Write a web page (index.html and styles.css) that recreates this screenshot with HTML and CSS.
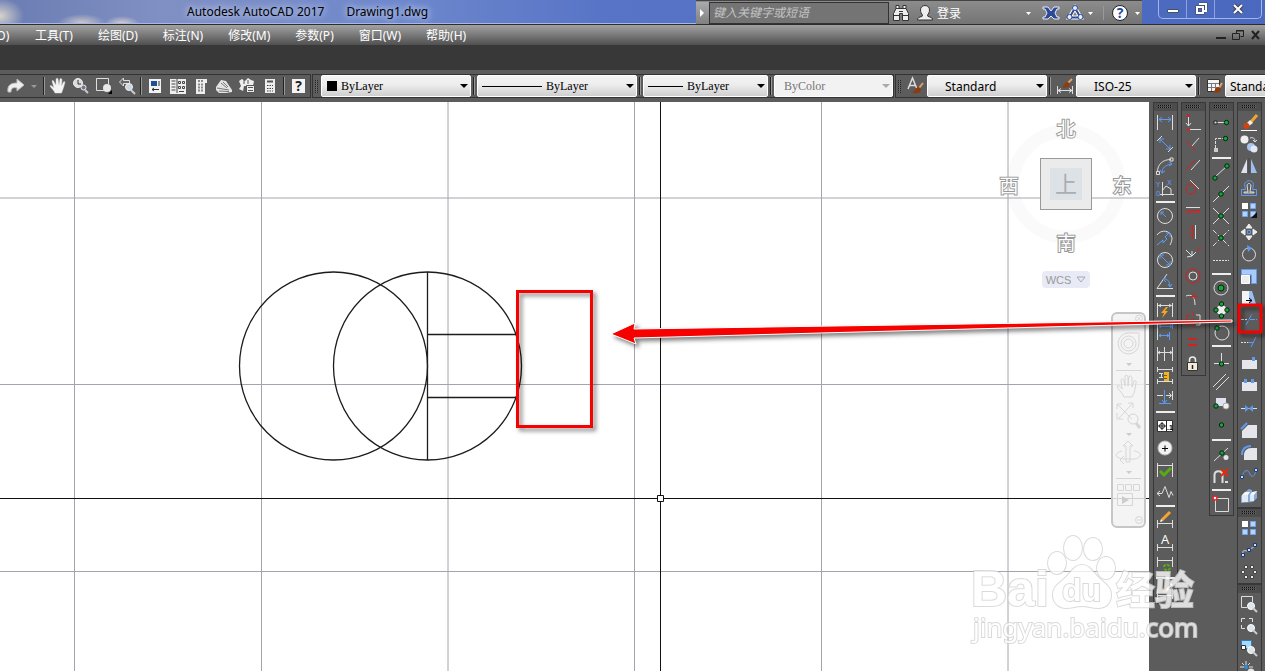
FILE: index.html
```html
<!DOCTYPE html>
<html lang="zh-CN">
<head>
<meta charset="utf-8">
<title>Autodesk AutoCAD 2017</title>
<link rel="stylesheet" href="styles.css">
</head>
<body>
<div class="app">
  <header class="titlebar">
    <h1 class="title"><span>Autodesk AutoCAD 2017</span><span>Drawing1.dwg</span></h1>
    <div class="info">
      <button class="expand" aria-label="展开"><svg width="12" height="22"><path d="M4 7l4 4-4 4z" fill="#fff"/></svg></button>
      <input class="search" type="text" aria-label="搜索" placeholder="键入关键字或短语">
      <button class="info-btn" aria-label="搜索"><svg width="24" height="22"><path d="M7 3.500h3v3h4v-3h3v3l2.500 5v7h-6v-7h-3v7h-6v-7L7 6.500z" fill="#eee" stroke="#333"/><path d="M5 13.500h5M14 13.500h5M10 9.500h4M7 6.500h3M14 6.500h3" stroke="#333"/></svg></button>
      <button class="info-btn login" aria-label="登录"><svg width="24" height="22"><path d="M12 3.500c3 0 4.500 2 4.500 4.500 0 2-1 4-2 5l.5 1.500c3 .5 4.500 1.500 4.500 3.500h-15c0-2 1.500-3 4.500-3.500l.5-1.500c-1-1-2-3-2-5 0-2.500 1.500-4.500 4.500-4.500z" fill="#eee" stroke="#333"/></svg><span>登录</span></button>
      <svg class="tri" width="8" height="22"><path d="M1 10h5l-2.500 3z" fill="#fff"/></svg>
      <button class="info-btn" aria-label="Exchange"><svg width="24" height="22"><path d="M4 5h5l3 4 3-4h5v2h-2l-2 4 2 4h2v2h-5l-3-3-3 3H4v-2h2l2-4-2-4H4z" fill="#2c4a96" stroke="#e8edff"/></svg></button>
      <button class="info-btn" aria-label="A360"><svg width="24" height="22"><path d="M12 6L6.500 15.500h11z" fill="none" stroke="#fff" stroke-width="4"/><path d="M12 6L6.500 15.500h11z" fill="none" stroke="#2c4a96" stroke-width="2"/><g fill="#e8edff" stroke="#2c4a96"><circle cx="12" cy="6" r="2.500"/><circle cx="6.500" cy="15" r="2.500"/><circle cx="17.500" cy="15" r="2.500"/></g></svg></button>
      <svg width="8" height="22"><path d="M1 10h5l-2.500 3z" fill="#fff"/></svg>
      <span class="info-line"></span>
      <button class="info-btn" aria-label="帮助"><svg width="24" height="22"><circle cx="12" cy="11" r="7.500" fill="#fff" stroke="#222"/><text x="12" y="16" class="help">?</text></svg></button>
      <svg width="10" height="22"><path d="M3 10h5l-2.500 3z" fill="#fff"/></svg>
    </div>
    <div class="winctl">
      <button aria-label="最小化"><svg width="14" height="14"><path d="M1.500 7.500h11v3h-11z" fill="#fff" stroke="#456"/></svg></button>
      <button aria-label="还原"><svg width="14" height="14"><g stroke="#445" stroke-width="3" fill="none"><path d="M5 2h7v7"/><path d="M3 5h6v6H3z"/></g><g stroke="#fff" stroke-width="2" fill="none"><path d="M5 2h7v7h-2"/><path d="M3 5h6v6H3z"/></g></svg></button>
      <button class="wide" aria-label="关闭"><svg width="14" height="14"><path d="M3 3l8 8M11 3l-8 8" stroke="#445" stroke-width="4"/><path d="M3 3l8 8M11 3l-8 8" stroke="#fff" stroke-width="2"/></svg></button>
    </div>
  </header>

  <nav class="menubar">
    <button class="cut">(O)</button><button>工具(T)</button><button>绘图(D)</button><button>标注(N)</button><button>修改(M)</button><button>参数(P)</button><button>窗口(W)</button><button>帮助(H)</button>
    <div class="docctl">
      <button aria-label="最小化文档"><svg width="14" height="14"><path d="M2 10h10" stroke="#222" stroke-width="2"/></svg></button>
      <button aria-label="还原文档"><svg width="14" height="14" fill="none" stroke="#222"><path d="M5.500 5V2.500h7v6h-3M5 3h8"/><path d="M1.500 5.500h7v6h-7z"/></svg></button>
      <button aria-label="关闭文档"><svg width="14" height="14"><path d="M4 3l7 8M11 3l-7 8" stroke="#222" stroke-width="2"/></svg></button>
    </div>
  </nav>
  <div class="blank"></div>

  <div class="bars">
    <div class="bar first">
      <button aria-label="重做"><svg class="ic" viewBox="0 0 22 22"><path d="M12 4l7 6-7 6v-3c-4-1-6 0-6 4H3c-1-7 3-9 9-9z" fill="#eee" stroke="#bbb"/></svg></button>
      <button class="drop" aria-label="重做列表"><svg width="10" height="22"><path d="M2 10h6l-3 3z" fill="#999"/></svg></button>
      <i class="sep"></i>
      <button aria-label="平移"><svg class="ic" viewBox="0 0 22 22"><path d="M8 18c-1-3-4-5-5-7 1-1 2 0 4 2L5 6c1-1 2 0 2 1l2 3V4c1-1 2-1 2 0l1 6 1-6c1-1 2 0 2 1l-.5 6 2-4c1-1 2 0 1 2-1 4-2 6-3 9z" fill="#f4f4f4" stroke="#ddd" stroke-width=".5"/></svg></button>
      <button aria-label="实时缩放"><svg class="ic" viewBox="0 0 22 22"><circle cx="8" cy="8" r="4.500" fill="#ddd" stroke="#eee"/><path d="M8 5v4h3" fill="none" stroke="#333"/><circle cx="13.500" cy="12.500" r="2.500" fill="#778" stroke="#eee"/><path d="M15 15l3 3" stroke="#ccc" stroke-width="2"/></svg></button>
      <button aria-label="窗口缩放"><svg class="ic" viewBox="0 0 22 22"><path d="M12 15.500H3.500v-12h12V9" class="w"/><circle cx="14" cy="13" r="4" fill="#e8e8e8"/><path d="M19 15v4h-4z" fill="#000"/></svg></button>
      <button aria-label="上一个视图"><svg class="ic" viewBox="0 0 22 22"><path d="M3.500 7l4-4v2.500h6v3h-6V11z" fill="#666" stroke="#ddd"/><circle cx="13" cy="12" r="3.500" fill="#ccd6e6" stroke="#eee"/><path d="M15 15l4 4" stroke="#ccc" stroke-width="2"/></svg></button>
      <i class="sep"></i>
      <button aria-label="特性"><svg class="ic" viewBox="0 0 22 22"><path d="M5 4h12v14H5z" fill="#f2f2f2"/><path d="M7 6h6v5H7z" fill="#1d4f9c"/><path d="M8 14.500h7M10 13l-2 1.500 2 1.500M15 6v5" stroke="#333" fill="none"/></svg></button>
      <button aria-label="设计中心"><svg class="ic" viewBox="0 0 22 22"><path d="M3 4h16v15H3z" fill="#eee"/><g fill="none" stroke="#444"><path d="M4.500 6h4M4.500 9h4M4.500 12h4M4.500 15h4M10 4v14"/><path d="M11.500 6.500h2v2h-2zM15.500 6.500h2v2h-2zM11.500 11.500h2v2h-2zM15.500 11.500h2v2h-2zM12 16.500h5"/></g></svg></button>
      <button aria-label="工具选项板"><svg class="ic" viewBox="0 0 22 22"><path d="M6 4h11v4h-2v11H6z" fill="#eee"/><path d="M8 6h5M8 9.500h5M8 12.500h5M8 15.500h5" stroke="#888" stroke-width="2" stroke-dasharray="2 1"/></svg></button>
      <button aria-label="图纸集"><svg class="ic" viewBox="0 0 22 22"><path d="M3 12l5-7 5 1 6 9v2l-6 1H6l-3-3z" fill="#e4e4e4"/><path d="M8 8l6 5M10 7l5 5M4 13l12 2M6 16l10 .5" stroke="#777" fill="none"/></svg></button>
      <button aria-label="标记集"><svg class="ic" viewBox="0 0 22 22"><path d="M3 6l3-2 3 2 3-3 3 2 3 1-1 5H8l-1 5-4-2 2-3z" fill="#eee"/><path d="M10.500 10.500h8v7h-8z" fill="#eee" stroke="#555"/><path d="M12 12.500h5M12 15.500h5M8 4v5M12 5v4" stroke="#555"/></svg></button>
      <button aria-label="快速计算器"><svg class="ic" viewBox="0 0 22 22"><path d="M6 4h10v14H6z" fill="#eee"/><path d="M8 6.500h6" stroke="#555" stroke-width="2"/><path d="M8 10.500h6M8 13.500h6M8 16h6" stroke="#444" stroke-dasharray="1.500 1"/></svg></button>
      <i class="sep"></i>
      <button aria-label="帮助"><svg class="ic" viewBox="0 0 22 22"><path d="M5 4h13v14H5z" fill="#f4f4f4"/><text x="11.500" y="16" class="q">?</text></svg></button>
    </div>
    <div class="bar">
      <i class="grip-v"></i>
      <label class="combo w150"><svg width="15" height="12"><path d="M5 1h10v10H5z"/></svg><select class="song" aria-label="颜色"><option>ByLayer</option></select><svg width="12" height="8"><path d="M2 2h8L6 6z"/></svg></label>
      <i class="sep6"></i>
      <label class="combo w160"><svg width="64" height="12"><path d="M4 6.500h60" stroke="#000"/></svg><select class="song" aria-label="线型"><option>ByLayer</option></select><svg width="12" height="8"><path d="M2 2h8L6 6z"/></svg></label>
      <i class="sep6"></i>
      <label class="combo w125"><svg width="39" height="12"><path d="M4 6.500h35" stroke="#000"/></svg><select class="song" aria-label="线宽"><option>ByLayer</option></select><svg width="12" height="8"><path d="M2 2h8L6 6z"/></svg></label>
      <i class="sep6"></i>
      <label class="combo w119 off"><select class="song" disabled aria-label="打印样式"><option>ByColor</option></select><svg width="12" height="8"><path d="M2 2h8L6 6z" fill="#aaa"/></svg></label>
    </div>
    <div class="bar last">
      <i class="grip-v"></i>
      <button aria-label="文字样式"><svg class="ic" viewBox="0 0 22 22"><path d="M3 14L7.500 3 12 14M5 10.500h6" fill="none" stroke="#ddd" stroke-width="1.500"/><path d="M18 8l-4 5" stroke="#e0a36c" stroke-width="2"/><path d="M14 12c-4 0-3 4-7 5 4 3 9 1 9-3z" fill="#8e3c0c"/></svg></button>
      <label class="combo w120 pad"><select aria-label="文字样式"><option>Standard</option></select><svg width="12" height="8"><path d="M2 2h8L6 6z"/></svg></label>
      <i class="sep6"></i>
      <button aria-label="标注样式管理器"><svg class="ic" viewBox="0 0 22 22"><path d="M3.500 11v8M18.500 11v8M4 15.500h14M7 13.500l-3 2 3 2M15 13.500l3 2-3 2" class="w"/><path d="M18 4l-4 4" stroke="#e0a36c" stroke-width="2"/><path d="M14 7c-4 0-3 3-6 5 4 2 8 0 8-3z" fill="#8e3c0c"/></svg></button>
      <label class="combo w120 pad"><select aria-label="标注样式"><option>ISO-25</option></select><svg width="12" height="8"><path d="M2 2h8L6 6z"/></svg></label>
      <i class="sep6"></i>
      <button aria-label="表格样式"><svg class="ic" viewBox="0 0 22 22"><path d="M4.500 4.500h12v12h-12z" fill="#f4f4f4" stroke="#333"/><path d="M5 8.500h11M5 12.500h11M8.500 9v7M12.500 9v7" stroke="#777"/><path d="M19 8l-3 5" stroke="#e0a36c" stroke-width="2"/><path d="M16 12c-4 0-3 3-6 5 4 2 8 0 8-3z" fill="#8e3c0c"/></svg></button>
      <label class="combo w120 near"><select aria-label="表格样式"><option>Standard</option></select><svg width="12" height="8"><path d="M2 2h8L6 6z"/></svg></label>
    </div>
  </div>

  <div class="work">
    <main class="canvas">
      <svg class="drawing" aria-label="绘图区">
        <g stroke="#a4a4ae"><path d="M74.500 0v2000M261.500 0v2000M448 0v2000M634.500 0v2000M821.500 0v2000M1008 0v2000M0 96h3000M0 282.500h3000M0 469.500h3000"/></g>
        <g fill="none" stroke="#1c1c1c" stroke-width="1.300"><circle cx="333.500" cy="264" r="94"/><circle cx="427.500" cy="264" r="94"/><path d="M427.500 170v188M427.500 232.500h90M427.500 295.500h90"/></g>
        <path d="M660.500 0v2000M0 396.500h3000" stroke="#111"/>
        <path d="M657.500 393.500h6v6h-6z" fill="#fff" stroke="#111"/>
      </svg>
      <div class="cube">
        <svg width="136" height="150" viewBox="998 112 136 150">
          <circle cx="1066" cy="184" r="53" fill="none" stroke="#bbb" stroke-opacity=".08" stroke-width="13"/>
          <rect x="1040.500" y="158.500" width="51" height="51" fill="#ebebeb" stroke="#999"/>
          <rect x="1050" y="168" width="32" height="32" fill="#dde2e6"/>
          <text x="1066" y="192" class="face">上</text>
          <g class="dir"><text x="1066" y="136">北</text><text x="1009" y="193">西</text><text x="1122" y="193">东</text><text x="1066" y="250">南</text></g>
        </svg>
        <button class="wcs">WCS <svg width="10" height="7"><path d="M1 1h8L5 6z" fill="none" stroke="#aaa"/></svg></button>
      </div>
      <svg class="navbar" width="35" height="216" viewBox="0 0 35 216">
        <rect x="1" y="1" width="33" height="214" rx="5" fill="#f2f2f2" fill-opacity=".85" stroke="#c6c6c6" stroke-width="2"/>
        <g fill="none" stroke="#d6d6d6">
          <path d="M17.500 21a10.500 10.500 0 1 0 10.500 10.500V21z"/><circle cx="17.500" cy="31.500" r="7.500"/><circle cx="17.500" cy="31.500" r="4.500"/>
          <path d="M5 58.500h25M5 166.500h25"/>
          <path d="M13 85c-2-5-6-7-7-11 2-1 3 0 5 3l-1-9c1-2 3-1 3 1l1 5V64c1-1 3-1 3 1v9l1-9c1-2 3-1 3 1v9l2-6c1-1 3 0 2 2-1 6-1 9-4 14z"/>
          <path d="M7 93l14 14M21 92L8 106M6 97v-5h5M17 91h5v5M6 101v6h6"/><circle cx="22" cy="107" r="5"/><path d="M25 111l4 5" stroke-width="3"/>
          <path d="M15 150v-16h-3l5-5 5 5h-3v16zM11 139c-8 2-8 7 2 8h11c8-2 7-7-1-8M13 144l-4 4 4 4"/>
          <path d="M6.500 172.500h6v6h-6zM14.500 172.500h6v6h-6zM22.500 172.500h6v6h-6zM6.500 181.500h15v12h-15z"/>
          <circle cx="28" cy="6.500" r="3.500"/><path d="M26 4.500l4 4M30 4.500l-4 4"/><circle cx="28" cy="208" r="3.500"/><path d="M26 208h4"/>
        </g>
        <path d="M15 51h6l-3 3zM15 121h6l-3 3zM15 159h6l-3 3zM11 184l7 4-7 4z" fill="#ccc"/>
      </svg>
    </main>

    <aside class="rail">
      <div class="col">
        <div class="tool"><i class="grip-h"></i>
          <button aria-label="线性"><svg class="ic" viewBox="0 0 22 22"><path d="M3.500 4v15M18.500 4v15" class="w"/><path d="M5 8.500h12M8 6L5 8.500 8 11M14 6l3 2.500-3 2.500" class="b"/></svg></button>
          <button aria-label="对齐"><svg class="ic" viewBox="0 0 22 22"><path d="M3 8l5-5M14 19l5-5" class="w"/><path d="M6 6l10 10M6 10V6h4M16 12v4h-4" class="b"/></svg></button>
          <button aria-label="弧长"><svg class="ic" viewBox="0 0 22 22"><path d="M3.500 17C3.500 9 9 4.500 17 4.500M2.500 16.500h3v3h-3zM16 3h3v3h-3z" class="w"/><path d="M8 18c0-5 3-8 10-9M6 15l2 3 3-2M15 7l3 2-3 2" class="b"/></svg></button>
          <button aria-label="坐标"><svg class="ic" viewBox="0 0 22 22"><path d="M8.500 5v14M6 17.500h14M8 14l4-5 5 3v5" class="w"/><text x="2" y="10" class="mini">Y</text><text x="13" y="8" class="mini">X</text><text x="2" y="19" class="mini">0</text></svg></button>
          <hr>
          <button aria-label="半径"><svg class="ic" viewBox="0 0 22 22"><circle cx="11" cy="11" r="7.500" class="w"/><path d="M12 12L7 7M7 10V7h3" class="b"/></svg></button>
          <button aria-label="折弯"><svg class="ic" viewBox="0 0 22 22"><path d="M3 8c4-6 14-5 15 3 0 3-1 5-2 7" class="w"/><path d="M3 18l6-5v3l4-4-2-2 4-4M12 6h4v4" class="b"/></svg></button>
          <button aria-label="直径"><svg class="ic" viewBox="0 0 22 22"><circle cx="11" cy="11" r="7.500" class="w"/><path d="M6 6l10 10M6 10V6h4M16 12v4h-4" class="b"/></svg></button>
          <button aria-label="角度"><svg class="ic" viewBox="0 0 22 22"><path d="M13 3L3 17.500h16" class="w"/><path d="M10 8c4 0 6 3 6 8M12 6l-3 2 3 3M14 13l2 3 2-3" class="b"/></svg></button>
          <hr>
          <button aria-label="快速标注"><svg class="ic" viewBox="0 0 22 22"><path d="M3.500 4v14M18.500 4v14M4 6.500h14M7 5L5 6.500 7 8M15 5l2 1.500L15 8" class="w"/><path d="M12 8l-5 6h3l-2 5 6-7h-3l3-4z" fill="#f6a41d"/></svg></button>
          <button aria-label="基线"><svg class="ic" viewBox="0 0 22 22"><path d="M3.500 3v16" class="w"/><path d="M18.500 3v5M15.500 11v8M5 5.500h13M5 14.500h10M7 4L5 5.500 7 7M16 4l2 1.500L16 7M7 13l-2 1.500L7 16M13 13l2 1.500-2 1.500" class="b"/></svg></button>
          <button aria-label="连续"><svg class="ic" viewBox="0 0 22 22"><path d="M3.500 4v14M10.500 4v14M18.500 4v14M4 9.500h14M6 8L4 9.500 6 11M16 8l2 1.500-2 1.500" class="w"/></svg></button>
          <button aria-label="等距标注"><svg class="ic" viewBox="0 0 22 22"><path d="M3.500 2v5M18.500 2v5M4 4.500h14M3.500 14v5M18.500 14v5M4 16.500h14M5 8.500h4M7.500 8v5M5 12.500h4" class="w"/><path d="M10 7h5v9h-5v-2h3v-1h-3v-2h3v-1h-3z" fill="#f3b41b"/></svg></button>
          <button aria-label="折断标注"><svg class="ic" viewBox="0 0 22 22"><path d="M3 8.500h6M12 8.500h5M15 6l2.500 2.500L15 11M18.500 4v9" class="w"/><path d="M10.500 3v14M5 16.500h12M8 13l2.500 3 2.500-3" class="b"/></svg></button>
          <hr>
          <button aria-label="公差"><svg class="ic" viewBox="0 0 22 22"><path d="M3.500 5.500h15v11h-15z" fill="#fff" stroke="#333"/><path d="M12.500 6v10M4 11h8M8 7v8" stroke="#222"/><circle cx="8" cy="11" r="2.500" fill="none" stroke="#222"/><text x="13" y="15" class="tiny">.1</text></svg></button>
          <button aria-label="圆心标记"><svg class="ic" viewBox="0 0 22 22"><circle cx="11" cy="11" r="7" fill="#f2f2f2" stroke="#bbb"/><path d="M8 11.500h6M11 8.500v6" stroke="#000"/></svg></button>
          <button aria-label="检验"><svg class="ic" viewBox="0 0 22 22"><path d="M3.500 4v14M18.500 4v14M4 6.500h14" class="w"/><path d="M6 12l4 4 7-7" fill="none" stroke="#56ad12" stroke-width="3"/></svg></button>
          <button aria-label="折弯线性"><svg class="ic" viewBox="0 0 22 22"><path d="M3 12.500h5l3-7 4 11 2-6 2 4M6 10l-3 2.500L6 15" class="w"/></svg></button>
          <hr>
          <button aria-label="编辑标注"><svg class="ic" viewBox="0 0 22 22"><path d="M3.500 11v8M18.500 11v8M4 14.500h14" class="w"/><path d="M8 11l8-8" stroke="#f2a531" stroke-width="3"/><path d="M6 13l1-3 2 2z" fill="#fff"/></svg></button>
          <button aria-label="编辑标注文字"><svg class="ic" viewBox="0 0 22 22"><path d="M3.500 13v7M18.500 13v7M4 16.500h14" class="w"/><text x="11" y="13" class="cap">A</text></svg></button>
          <button aria-label="标注更新"><svg class="ic" viewBox="0 0 22 22"><path d="M3.500 4v10M18.500 4v10M4 7.500h14" class="w"/><path d="M10 14c0-3 5-3 6 0M16 15c-1 3-5 3-6 0" fill="none" stroke="#56ad12" stroke-width="2" stroke-dasharray="3 1"/></svg></button>
          <hr>
          <button aria-label="标注样式"><svg class="ic" viewBox="0 0 22 22"><path d="M3.500 8v10M18.500 8v10M4 14.500h14" class="w"/><path d="M18 3l-6 7" stroke="#fff" stroke-width="2"/><path d="M13 8l-5 3 4 1z" fill="#e07a1f"/></svg></button>
        </div>
      </div>

      <div class="col">
        <div class="tool"><i class="grip-h"></i>
          <button aria-label="竖直约束"><svg class="ic" viewBox="0 0 22 22"><path d="M6.500 6v9M4 12l2.500 3L9 12M8 18.500h11" class="w"/><path d="M5.500 3.500h2v2h-2zM5.500 17.500h2v2h-2z" class="r"/></svg></button>
          <button aria-label="垂直"><svg class="ic" viewBox="0 0 22 22"><path d="M4 8l10 10" class="r"/><path d="M10 13l7-8" class="w"/></svg></button>
          <button aria-label="平行"><svg class="ic" viewBox="0 0 22 22"><path d="M4 15L13 5" class="r"/><path d="M9 15l9-10" class="w"/></svg></button>
          <button aria-label="相切"><svg class="ic" viewBox="0 0 22 22"><circle cx="9" cy="12" r="5" class="r"/><path d="M8 3l9 9" class="w"/></svg></button>
          <button aria-label="水平"><svg class="ic" viewBox="0 0 22 22"><path d="M4 8.500h14" class="w"/><path d="M4 11.500h14M7 12l-3 3M11 12l-3 3M15 12l-3 3M18 12l-3 3" class="r"/></svg></button>
          <button aria-label="竖直"><svg class="ic" viewBox="0 0 22 22"><path d="M13.500 4v14" class="w"/><path d="M10.500 4v14M10 5L7 8M10 9l-3 3M10 13l-3 3" class="r"/></svg></button>
          <button aria-label="共线"><svg class="ic" viewBox="0 0 22 22"><path d="M4 7l6 6 4-4M5 14l5-1M10 8v5" class="w"/><path d="M14 9l5-5" class="r"/></svg></button>
          <button aria-label="同心"><svg class="ic" viewBox="0 0 22 22"><circle cx="11" cy="11" r="7" class="r"/><circle cx="11" cy="11" r="4" class="w"/></svg></button>
          <button aria-label="平滑"><svg class="ic" viewBox="0 0 22 22"><path d="M4 9c5-2 9 0 9 9" class="w"/><path d="M12 6v6M8 9.500h8" class="r"/></svg></button>
          <button aria-label="对称"><svg class="ic" viewBox="0 0 22 22"><path d="M11.500 3v4M11.500 9v4M11.500 15v4M8 6H5v10h3" class="r"/><path d="M14 6h4v10h-4" class="w"/></svg></button>
          <button aria-label="相等"><svg class="ic" viewBox="0 0 22 22"><path d="M6 8h9M6 14h9" class="r thick"/></svg></button>
          <button aria-label="固定"><svg class="ic" viewBox="0 0 22 22"><path d="M7.500 10V7c0-4 6-4 6 0v3" fill="none" stroke="#eee" stroke-width="1.500"/><path d="M5.500 9.500h10v8h-10z" fill="#f3ecd8" stroke="#333"/><path d="M10.500 12v4" stroke="#222" stroke-width="1.500"/></svg></button>
        </div>
      </div>

      <div class="col">
        <div class="tool"><i class="grip-h"></i>
          <button aria-label="临时追踪点"><svg class="ic" viewBox="0 0 22 22"><path d="M6 11.500h9" class="w"/><path d="M4 10h3v3H4z" fill="#ddd" stroke="#222"/><circle cx="16.500" cy="11.500" r="2.200" class="g"/></svg></button>
          <button aria-label="捕捉自"><svg class="ic" viewBox="0 0 22 22"><path d="M15 5.500H5.500V15" class="w" stroke-dasharray="3 1"/><path d="M4 15h4v4H4z" fill="#ccc"/><circle cx="15.500" cy="5.500" r="2.200" class="g"/></svg></button>
          <hr>
          <button aria-label="端点"><svg class="ic" viewBox="0 0 22 22"><path d="M5 16L17 5" class="w"/><circle cx="17" cy="5" r="2.200" class="g"/><circle cx="5" cy="17" r="2.200" class="g"/></svg></button>
          <button aria-label="中点"><svg class="ic" viewBox="0 0 22 22"><path d="M3 19L19 3" class="w"/><circle cx="11" cy="11" r="2.200" class="g"/></svg></button>
          <button aria-label="交点"><svg class="ic" viewBox="0 0 22 22"><path d="M3 19L19 3M3 3l16 16" class="w"/><circle cx="11" cy="11" r="2.200" class="g"/></svg></button>
          <button aria-label="外观交点"><svg class="ic" viewBox="0 0 22 22"><path d="M3 19L19 3M3 3l16 16" class="w" stroke-dasharray="5 2"/><circle cx="11" cy="11" r="2.200" class="g"/></svg></button>
          <button aria-label="延长线"><svg class="ic" viewBox="0 0 22 22"><path d="M3 11.500h5M9 11.500h10" class="w" stroke-dasharray="2 1"/></svg></button>
          <hr>
          <button aria-label="圆心"><svg class="ic" viewBox="0 0 22 22"><circle cx="11" cy="11" r="7" class="w"/><circle cx="11" cy="11" r="3" class="g"/></svg></button>
          <button aria-label="象限点"><svg class="ic" viewBox="0 0 22 22"><circle cx="11.500" cy="11" r="5" fill="#eee"/><circle cx="11.500" cy="5" r="2.200" class="g"/><circle cx="11.500" cy="17" r="2.200" class="g"/><circle cx="6" cy="11" r="2.200" class="g"/><circle cx="17" cy="11" r="2.200" class="g"/></svg></button>
          <button aria-label="切点"><svg class="ic" viewBox="0 0 22 22"><circle cx="12" cy="12" r="7" class="w"/><circle cx="7" cy="7" r="2.200" class="g"/></svg></button>
          <hr>
          <button aria-label="垂足"><svg class="ic" viewBox="0 0 22 22"><path d="M11.500 4v11M4 14.500h15" class="w"/><circle cx="11.500" cy="15" r="2.200" class="g"/></svg></button>
          <button aria-label="平行线"><svg class="ic" viewBox="0 0 22 22"><path d="M3 16L16 3M6 19L19 6" class="w"/></svg></button>
          <button aria-label="插入点"><svg class="ic" viewBox="0 0 22 22"><path d="M6 5h10v8H6z" fill="#dfe1ee"/><circle cx="16" cy="13" r="3" fill="#eee" stroke="#aaa"/><circle cx="6" cy="13" r="2.200" class="g"/></svg></button>
          <button aria-label="节点"><svg class="ic" viewBox="0 0 22 22"><circle cx="11.500" cy="10" r="2.200" class="g"/></svg></button>
          <hr>
          <button aria-label="最近点"><svg class="ic" viewBox="0 0 22 22"><path d="M4 18L18 5" class="w"/><circle cx="12" cy="10" r="2.200" class="g"/><circle cx="16" cy="14.500" r="2.500" fill="#e4e4e4"/></svg></button>
          <button aria-label="无捕捉"><svg class="ic" viewBox="0 0 22 22"><path d="M4.500 18v-8c0-5 8-5 8 0v8" fill="none" stroke="#ddd" stroke-width="2"/><path d="M11 4l7 7M18 4l-7 7" stroke="#e82a12" stroke-width="2"/><path d="M15 17h3" stroke="#ddd" stroke-width="2"/></svg></button>
          <hr>
          <button aria-label="对象捕捉设置"><svg class="ic" viewBox="0 0 22 22"><path d="M5.500 6v12.500h13v-13H7" class="w"/><circle cx="5" cy="5" r="2" fill="#fff" stroke="#e22" stroke-width="1.500"/></svg></button>
        </div>
      </div>

      <div class="col">
        <div class="tool"><i class="grip-h"></i>
          <button aria-label="删除"><svg class="ic" viewBox="0 0 22 22"><path d="M3 19.500h16" stroke="#fff"/><path d="M19 4l-7 8" stroke="#f2a531" stroke-width="3"/><path d="M12 9l3 3-4 3-2-3z" fill="#eee"/><circle cx="8.500" cy="15" r="3" fill="#d4410e"/></svg></button>
          <button aria-label="复制"><svg class="ic" viewBox="0 0 22 22"><circle cx="6.500" cy="6.500" r="4" fill="#eee"/><path d="M12 5c3-1 5 0 5 4M15 7l2 2 2-2" class="w"/><circle cx="13" cy="14" r="4" fill="#a9c4ee"/><circle cx="16" cy="16" r="3.500" fill="#dfe9f8"/></svg></button>
          <button aria-label="镜像"><svg class="ic" viewBox="0 0 22 22"><path d="M9 4v14H3z" fill="#dce3ec"/><path d="M13 4v14h6z" fill="#9dbfee"/><path d="M11 3v16" stroke="#444"/></svg></button>
          <button aria-label="偏移"><svg class="ic" viewBox="0 0 22 22"><path d="M3.500 18.500v-6h4l-1-5c1-5 9-5 9 0l-1 5h4v6z" class="b"/><path d="M6 16v-1h4l-1-7c1-2 3-2 4 0l-1 7h4v1z" class="w"/></svg></button>
          <button aria-label="阵列"><svg class="ic" viewBox="0 0 22 22"><path d="M4 4h6v6H4z" fill="#fff"/><path d="M12.500 4.500h5v5h-5zM4.500 12.500h5v5h-5zM12.500 12.500h5v5h-5z" fill="#b6d2fb" stroke="#6ea5f0"/><path d="M19 13v6h-6z" fill="#111"/></svg></button>
          <button aria-label="移动"><svg class="ic" viewBox="0 0 22 22"><path d="M11 3l3 4H8zM11 19l3-4H8zM3 11l4-3v6zM19 11l-4-3v6z" fill="#eee" stroke="#eee"/><path d="M9.500 9.500h3v3h-3z" class="b"/></svg></button>
          <button aria-label="旋转"><svg class="ic" viewBox="0 0 22 22"><circle cx="11" cy="11.500" r="6.500" class="w"/><path d="M9 2l5 3-4 4z" fill="#5d9bf2"/></svg></button>
          <button aria-label="缩放"><svg class="ic" viewBox="0 0 22 22"><path d="M3.500 4.500h15v14h-5V10h-10z" fill="#a9c9f8" stroke="#5d9bf2"/><path d="M3.500 10.500h8v8h-8z" fill="#eee" stroke="#fff"/></svg></button>
          <button aria-label="拉伸"><svg class="ic" viewBox="0 0 22 22"><path d="M4 4h7v13H4z" fill="#f4f4f4"/><path d="M11 4h3l4 13h-7z" fill="#9dc0f3"/><path d="M8 13.500h6M11 11l3 2.500-3 2.500" stroke="#000" fill="none"/></svg></button>
          <button aria-label="修剪"><svg class="ic" viewBox="0 0 22 22"><path d="M8 16l6-11M12 10.500h7" class="b" stroke-dasharray="5 1"/><path d="M3 10.500h6" class="w" stroke-dasharray="3 1"/></svg></button>
          <button aria-label="延伸"><svg class="ic" viewBox="0 0 22 22"><path d="M13 16l5-10M10 11.500h5" class="b"/><path d="M3 11.500h7" class="w" stroke-dasharray="2 1"/></svg></button>
          <button aria-label="打断于点"><svg class="ic" viewBox="0 0 22 22"><path d="M4 7h15v9H4z" fill="#e4e6ea"/><path d="M14 4h3v4h-3z" fill="#5d9bf2"/></svg></button>
          <button aria-label="打断"><svg class="ic" viewBox="0 0 22 22"><path d="M4 7h15v9H4z" fill="#e4e6ea"/><path d="M6 4h3v4H6zM13 4h3v4h-3z" fill="#5d9bf2"/></svg></button>
          <button aria-label="合并"><svg class="ic" viewBox="0 0 22 22"><path d="M3 11.500h16" class="w"/><path d="M7 8l4 3.500L7 15zM15 8l-4 3.500 4 3.500z" fill="#5d9bf2"/></svg></button>
          <button aria-label="倒角"><svg class="ic" viewBox="0 0 22 22"><path d="M4 19v-7l6-6h9v13z" fill="#e4e6ea"/><path d="M3 10l6-6" class="b thick"/></svg></button>
          <button aria-label="圆角"><svg class="ic" viewBox="0 0 22 22"><path d="M6 19v-5c0-4 3-7 7-7h6v12z" fill="#e4e6ea"/><path d="M4 14c0-6 3-9 9-9" class="b thick"/></svg></button>
          <button aria-label="光顺曲线"><svg class="ic" viewBox="0 0 22 22"><path d="M4 14c2-8 6-8 8-3s5 2 6-4" class="b"/><circle cx="4" cy="14" r="1.700" fill="#cfe0ff" stroke="#123b80"/><circle cx="18" cy="7" r="1.700" fill="#cfe0ff" stroke="#123b80"/></svg></button>
          <button aria-label="分解"><svg class="ic" viewBox="0 0 22 22"><path d="M7 7l4-3 3 1v3l5-2v7l-4 4-12 1v-7z" fill="#86a8d4"/><path d="M4 10h6v7H4zM12 10h4v6h-4z" fill="#dfe8f4"/><path d="M7 7h5l-2 3H4zM14 7l5-1-3 4h-4z" fill="#f4f7fb"/></svg></button>
        </div>
        <div class="tool"><i class="grip-h"></i>
          <button aria-label="编辑阵列"><svg class="ic" viewBox="0 0 22 22"><path d="M4 4h6v6H4z" fill="#fff"/><path d="M12.500 4.500h5v5h-5zM4.500 12.500h5v5h-5zM12.500 12.500h5v5h-5z" fill="#b6d2fb" stroke="#6ea5f0"/></svg></button>
          <button aria-label="编辑样条曲线"><svg class="ic" viewBox="0 0 22 22"><path d="M5 16c-1-8 3-2 6-5s4-1 6-5" class="w"/><path d="M3.500 14.500h3v3h-3zM9.500 9.500h3v3h-3zM15.500 4.500h3v3h-3z" fill="#cfe0ff" stroke="#123b80"/></svg></button>
          <button aria-label="极轴阵列"><svg class="ic" viewBox="0 0 22 22"><g fill="#eee" stroke="#444"><path d="M6.500 4.500h3v3h-3zM12.500 4.500h3v3h-3zM3.500 9.500h3v3h-3zM15.500 9.500h3v3h-3zM6.500 14.500h3v3h-3zM12.500 14.500h3v3h-3z"/></g></svg></button>
        </div>
        <div class="tool"><i class="grip-h"></i>
          <button aria-label="缩放窗口"><svg class="ic" viewBox="0 0 22 22"><path d="M9 14.500H3.500v-11h11V9" class="w"/><circle cx="13" cy="13" r="3.500" fill="#dde4ec" stroke="#fff"/><path d="M15 15l4 4" stroke="#ccc" stroke-width="2"/></svg></button>
          <button aria-label="范围缩放"><svg class="ic" viewBox="0 0 22 22"><path d="M3.500 7V3.500H7M11 3.500h3.500V7M3.500 10v3.500H7" class="w"/><circle cx="13" cy="13" r="3.500" fill="#dde4ec" stroke="#fff"/><path d="M15 15l4 4" stroke="#ccc" stroke-width="2"/></svg></button>
          <button aria-label="动态缩放"><svg class="ic" viewBox="0 0 22 22"><path d="M3.500 3.500h10v8h-10z" fill="#a9d9f5" stroke="#2b7fc9"/><path d="M3.500 8.500h4v4h-4z" fill="#fff" stroke="#333"/><circle cx="13" cy="13" r="3.500" fill="#dde4ec" stroke="#fff"/><path d="M15 15l4 4" stroke="#ccc" stroke-width="2"/></svg></button>
          <button aria-label="中心缩放"><svg class="ic" viewBox="0 0 22 22"><path d="M8 2v4M2 8h4M11 8h4M4 4l2 2M12 4l-2 2" class="w"/><circle cx="8" cy="8" r="2" fill="#2b8fe0"/><circle cx="13" cy="13" r="3.500" fill="#dde4ec"/></svg></button>
        </div>
      </div>
    </aside>
  </div>

  <svg class="notes" aria-hidden="true">
    <g class="mark">
      <ellipse cx="1057" cy="563" rx="9" ry="11"/><ellipse cx="1073" cy="548" rx="9" ry="12"/><ellipse cx="1093" cy="549" rx="9" ry="11"/><ellipse cx="1106" cy="568" rx="9" ry="11"/>
      <path d="M1082 565c-8 0-11 8-17 13-6 6-12 8-12 17 0 8 6 13 13 13 6 0 10-2 16-2s10 2 16 2c8 0 13-5 13-13 0-9-6-11-12-17-6-5-9-13-17-13z"/>
      <text x="971" y="606" class="m-bai">Bai</text><text x="1062" y="601" class="m-du">du</text><text x="1116" y="604" class="m-jy">经验</text>
      <text x="973" y="637" class="m-url">jingyan.baidu.com</text>
    </g>
    <g class="red">
      <rect x="517.500" y="291.500" width="74" height="135"/>
      <path d="M611 334l24-11-1 6 598-9v2L634 338l2 6z" class="arrow"/>
      <rect x="1239" y="305" width="22" height="27"/>
    </g>
  </svg>
</div>
</body>
</html>
```
FILE: styles.css
```css
* { box-sizing: border-box; }
body { margin: 0; font-family: "Noto Sans", "Noto Sans CJK SC", sans-serif; font-size: 12px; color: #000; }
button, input, select { font: inherit; color: inherit; border: 0; background: none; padding: 0; margin: 0; border-radius: 0; }
svg { display: block; flex: none; }
.app { position: relative; display: flex; flex-direction: column; height: 100vh; overflow: hidden; background: #5c5c5c; }

/* title bar */
.titlebar {
  display: flex; flex: none; height: 25px; border-bottom: 1px solid #2c2c2c;
  background:
    radial-gradient(ellipse 24px 18px at 0 16px, #d8d4cc, transparent),
    radial-gradient(ellipse 24px 9px at 82px 23px, #cfc8c8, transparent),
    radial-gradient(ellipse 18px 8px at 122px 24px, #e0d4cc, transparent),
    linear-gradient(90deg, #6a7cb2, #8090c4 160px, #6e88cc 400px, #5874c6 600px, #4a68be);
}
.title { flex: 1; display: flex; gap: 22px; margin: 0; padding-left: 187px; font-size: 12px; font-weight: 400; line-height: 24px; white-space: nowrap; border-bottom: 1px solid #a8b8e4; text-shadow: 0 0 6px #c8d2f0, 0 0 8px #c8d2f0; }
.info { display: flex; align-items: center; width: 446px; background: linear-gradient(#8c8c8c, #747474); border-top: 1px solid #444; color: #fff; }
.expand { width: 13px; height: 22px; background: linear-gradient(#aaa, #808080); }
.search { width: 180px; height: 22px; padding: 0 3px; background: #747474; border: 1px solid #333; font-style: italic; }
.search::placeholder { color: #c4c4c4; opacity: 1; }
.info-btn { display: flex; align-items: center; height: 22px; }
.login { flex: 1; }
.tri { margin-right: 6px; }
.info-line { width: 1px; height: 14px; margin: 0 4px 0 8px; background: #999; }
.help { font: bold 14px "Open Sans", sans-serif; text-anchor: middle; fill: #1f4aa0; }
.winctl { display: flex; width: 104px; height: 19px; margin: 0 3px 0 16px; border: 1px solid #a4b4e4; border-width: 0 1px 1px; border-radius: 0 0 5px 5px; }
.winctl button { width: 28px; display: flex; align-items: center; justify-content: center; border-right: 1px solid #8ea2de; }
.winctl .wide { flex: 1; border-right: 0; }

/* menu */
.menubar { display: flex; flex: none; align-items: center; gap: 25px; height: 20px; background: linear-gradient(#a2a2a2, #505050); color: #fff; white-space: nowrap; }
.menubar .cut { margin-left: -8px; width: 18px; }
.docctl { display: flex; gap: 3px; margin-left: auto; padding-right: 3px; }
.blank { flex: none; height: 25px; background: #383838; }

/* horizontal toolbars */
.bars { display: flex; flex: none; gap: 1px; padding: 4px 0; overflow: hidden; }
.bar { display: flex; flex: none; align-items: center; height: 24px; border: 1px solid #333; }
.first { padding: 0 1px 0 4px; border-left: 0; }
.last { border-right: 0; }
.bar button { display: flex; justify-content: center; width: 23px; }
.bar .drop { width: 14px; }
.ic { width: 22px; height: 22px; }
.q { font: bold 14px "Open Sans", sans-serif; text-anchor: middle; fill: #222; }
.sep { width: 5px; height: 18px; background: linear-gradient(90deg, transparent 2px, #222 2px, #222 3px, #999 3px, #999 4px, transparent 4px); }
.sep6 { width: 6px; height: 18px; background: linear-gradient(90deg, transparent 2px, #222 2px, #222 3px, #999 3px, #999 4px, transparent 4px); }
.grip-v { width: 8px; height: 14px; background: repeating-linear-gradient(#5c5c5c 0 1px, transparent 1px 2px), linear-gradient(90deg, transparent 2px, #222 2px, #222 3px, #777 3px, #777 4px, #222 4px, #222 5px, transparent 5px); }
.combo { display: flex; align-items: center; height: 22px; border: 1px solid #fff; border-radius: 2px; background: linear-gradient(#f4f4f4, #ececec 45%, #cfcfcf); }
.combo select { flex: 1; min-width: 0; height: 20px; appearance: none; outline: 0; }
.combo .song { font-family: "Liberation Serif", serif; padding-left: 4px; }
.combo.off { background: #f2f2f2; color: #777; }
.off select { opacity: 1; }
.combo.off .song { padding-left: 9px; }
.pad select { padding-left: 17px; }
.near select { padding-left: 4px; }
.w119 { width: 119px; } .w120 { width: 120px; } .w125 { width: 125px; } .w150 { width: 150px; } .w160 { width: 160px; }

/* drawing area */
.work { display: flex; flex: 1; min-height: 0; }
.canvas { position: relative; flex: 1; min-width: 0; background: #fff; overflow: hidden; }
.drawing { width: 100%; height: 100%; }
.cube { position: absolute; top: 10px; right: 15px; display: flex; flex-direction: column; align-items: center; gap: 9px; }
.face { font: 22px "Noto Sans CJK SC", sans-serif; text-anchor: middle; fill: #a8aeb2; }
.dir { font: 19px "Noto Sans CJK SC", sans-serif; text-anchor: middle; fill: #fff; stroke: #989898; stroke-width: 2; paint-order: stroke; }
.wcs { display: flex; align-items: center; gap: 5px; height: 17px; padding: 0 4px; border-radius: 4px; background: #e8eaf5; color: #999; font: 11px "Liberation Sans", sans-serif; }
.navbar { position: absolute; top: 210px; right: 3px; }

/* vertical toolbars */
.rail { display: flex; flex: none; align-items: flex-start; gap: 3px; width: 116px; padding-left: 4px; }
.col { width: 25px; }
.tool { border: 1px solid #383838; }
.tool button { display: block; width: 22px; height: 22px; }
.tool hr { height: 2px; margin: 2px; border: 0; background: #eee; }
.grip-h { display: block; height: 8px; background: linear-gradient(#4c4c4c 2px, transparent 2px 3px, #4c4c4c 3px 4px, transparent 4px 5px, #4c4c4c 5px), linear-gradient(90deg, #4c4c4c 4px, transparent 4px 18px, #4c4c4c 18px), repeating-linear-gradient(90deg, #111 0 1px, #666 1px 2px); }
.w { fill: none; stroke: #dedede; }
.b { fill: none; stroke: #5d9bf2; }
.r { fill: none; stroke: #d81e1e; }
.g { fill: #12a83c; stroke: #06210d; }
.thick { stroke-width: 2; }
.mini { font: 7px "DejaVu Sans", sans-serif; fill: #5d9bf2; }
.tiny { font: bold 7px "Liberation Sans", sans-serif; }
.cap { font: 13px "Open Sans", sans-serif; text-anchor: middle; fill: #fff; }

/* annotations above the window */
.notes { position: absolute; inset: 0; width: 100%; height: 100%; pointer-events: none; }
.red { filter: drop-shadow(3px 3px 2px rgba(0, 0, 0, .5)); }
.red rect { fill: none; stroke: #f60000; stroke-width: 3; }
.arrow { fill: #f60000; stroke: #fff; stroke-width: 1; }
.mark { opacity: .8; fill: #fff; stroke: #d2d2d2; stroke-width: 2; paint-order: stroke; }
.m-bai { font: bold 50px "Liberation Sans", sans-serif; }
.m-du { font: bold 32px "Liberation Sans", sans-serif; }
.m-jy { font: bold 39px "Noto Sans CJK SC", sans-serif; }
.m-url { font: 26px "Noto Sans", sans-serif; }
```
